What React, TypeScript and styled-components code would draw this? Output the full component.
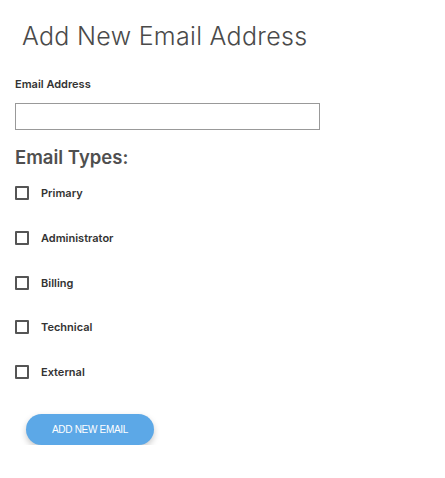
import styled, { createGlobalStyle } from 'styled-components';

const GlobalStyle = createGlobalStyle`
  body {
    margin: 0;
    background: #ffffff;
    font-family: Inter, 'Open Sans', sans-serif;
  }
`;

const Page = styled.div`
  display: flex;
  flex-direction: column;
  padding: 20px 15px 0 15px;
  width: 445px;
  box-sizing: border-box;
`;

const Title = styled.h1`
  margin: 0 0 0 7px;
  font-family: Inter, sans-serif;
  font-weight: 300;
  font-size: 25px;
  line-height: 32px;
  color: #4a4a4a;
  letter-spacing: 0.3px;
`;

const FieldLabel = styled.label`
  margin-top: 25px;
  font-family: Inter, sans-serif;
  font-weight: 600;
  font-size: 11px;
  line-height: 14px;
  color: #333333;
`;

const TextInput = styled.input`
  margin-top: 12px;
  width: 305px;
  height: 27px;
  box-sizing: border-box;
  border: 1px solid #999999;
  border-radius: 0;
  padding: 0 6px;
  font-size: 13px;
  outline: none;
`;

const Heading = styled.h2`
  margin: 15px 0 0 0;
  font-family: Inter, sans-serif;
  font-weight: 600;
  font-size: 18.5px;
  line-height: 24px;
  color: #4f4f4f;
`;

const TypeList = styled.div`
  display: flex;
  flex-direction: column;
  gap: 30.8px;
  margin-top: 17px;
`;

const TypeRow = styled.label`
  display: flex;
  align-items: center;
  gap: 12px;
  height: 14px;
  cursor: pointer;
`;

const Box = styled.span`
  width: 14px;
  height: 14px;
  box-sizing: border-box;
  border: 2px solid #555555;
  border-radius: 1px;
  flex-shrink: 0;
`;

const TypeName = styled.span`
  font-family: Inter, sans-serif;
  font-weight: 600;
  font-size: 11px;
  color: #333333;
`;

const AddButton = styled.button`
  margin: 35px 0 0 11px;
  width: 128px;
  height: 31px;
  border: none;
  border-radius: 16px;
  background: #5ca8e7;
  color: #ffffff;
  font-family: 'Liberation Sans', Arial, sans-serif;
  font-size: 10px;
  letter-spacing: -0.3px;
  text-transform: uppercase;
  box-shadow: 0 3px 6px rgba(0, 0, 0, 0.22);
  cursor: pointer;
  align-self: flex-start;
`;

const types = ['Primary', 'Administrator', 'Billing', 'Technical', 'External'];

export default function App() {
  return (
    <>
      <GlobalStyle />
      <Page>
        <Title>Add New Email Address</Title>
        <FieldLabel htmlFor='email'>Email Address</FieldLabel>
        <TextInput id='email' type='text' />
        <Heading>Email Types:</Heading>
        <TypeList>
          {types.map((t) => (
            <TypeRow key={t}>
              <Box />
              <TypeName>{t}</TypeName>
            </TypeRow>
          ))}
        </TypeList>
        <AddButton>Add New Email</AddButton>
      </Page>
    </>
  );
}
